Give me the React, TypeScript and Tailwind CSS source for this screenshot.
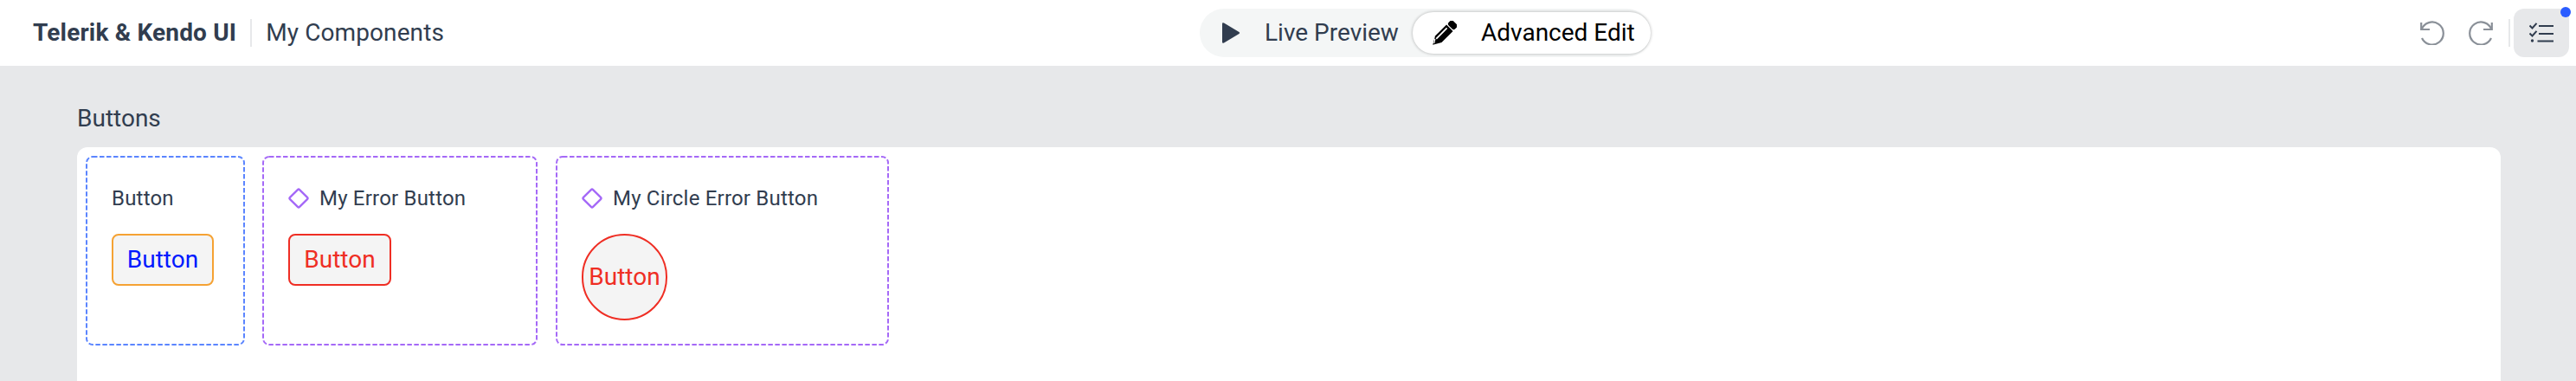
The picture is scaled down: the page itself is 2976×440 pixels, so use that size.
import React from "react";

const roboto = "font-['Roboto',sans-serif]";

function Diamond() {
  return (
    <svg width="24" height="24" viewBox="0 0 24 24" fill="none" className="shrink-0">
      <rect x="4.2" y="4.2" width="15.6" height="15.6" rx="1.5" transform="rotate(45 12 12)" stroke="#a569f7" strokeWidth="2.4" />
    </svg>
  );
}

function Tile({ w, cls, stroke, label, icon, children }: { w: number; cls: string; stroke: string; label: string; icon?: boolean; children: React.ReactNode }) {
  return (
    <div className={`${cls} relative h-[219px] shrink-0 pl-[30px] pt-[35px]`}>
      <svg width={w} height="219" className="absolute left-0 top-0" fill="none">
        <rect x="1" y="1" width={w - 2} height="217" rx="7" stroke={stroke} strokeWidth="2" strokeDasharray="5.5 2.5" />
      </svg>
      <div className="flex h-[28px] items-center gap-[12px] whitespace-nowrap text-[24px] leading-[28px] tracking-[0.2px] text-[#313d4f]">
        {icon && <Diamond />}
        <span>{label}</span>
      </div>
      <div className="mt-[27px] flex">{children}</div>
    </div>
  );
}

export default function App() {
  return (
    <div className={`flex h-[440px] w-[2976px] flex-col overflow-hidden whitespace-nowrap bg-[#e7e8ea] ${roboto}`}>
      <header className="flex h-[76px] shrink-0 items-center justify-between bg-white pl-[38px] pr-[8px]">
        <div className="flex w-[600px] items-center">
          <span className="text-[28px] font-bold leading-[36px] tracking-[0.17px] text-[#313d4f]">Telerik &amp; Kendo UI</span>
          <span className="ml-[16px] h-[32px] w-[2px] bg-[#e7e8ea]" />
          <span className="ml-[16px] text-[28px] leading-[36px] tracking-[0.1px] text-[#313d4f]">My Components</span>
        </div>

        <div className="ml-[748px] flex h-[56px] w-[521px] items-center rounded-full bg-[#f4f6f6] pl-[26px]">
          <svg width="21" height="26" viewBox="0 0 21 26" className="shrink-0">
            <path d="M2 1.5 L19.5 12 Q21 13 19.5 14 L2 24.5 Q0 25.5 0 23.5 V2.5 Q0 .5 2 1.5Z" fill="#313d4f" />
          </svg>
          <span className="ml-[28px] w-[154px] shrink-0 text-[28px] leading-[36px] text-[#313d4f]">Live Preview</span>
          <div className="ml-[17px] flex h-[48px] w-[275px] shrink-0 items-center rounded-full bg-white pl-[22px] shadow-[0_0_3px_1px_rgba(0,0,0,0.18)]">
            <svg width="29" height="29" viewBox="0 0 29 29" className="shrink-0">
              <g transform="rotate(45 14.5 14.5)">
                <rect x="9.2" y="-3" width="10.6" height="7.4" rx="2.6" fill="#000" />
                <path d="M9.2 5.6 H19.8 V24 L14.5 33.2 L9.2 24Z" fill="#000" />
                <path d="M12.4 8 V25.5" stroke="#fff" strokeWidth="1.8" />
                <path d="M11.4 26.5 L14.5 31 " stroke="#fff" strokeWidth="1.2" fill="none" />
              </g>
            </svg>
            <span className="ml-[28px] text-[28px] leading-[36px] text-black">Advanced Edit</span>
          </div>
        </div>

        <div className="ml-auto flex items-center">
          <svg width="28" height="28" viewBox="0 0 28 28" fill="none" stroke="#8a9098" strokeWidth="2.2" className="shrink-0">
            <path d="M1.6 10 A13 13 0 1 1 2 20" />
            <path d="M1.2 2 V10 H11" />
          </svg>
          <svg width="28" height="28" viewBox="0 0 28 28" fill="none" stroke="#8a9098" strokeWidth="2.2" className="ml-[28px] shrink-0">
            <path d="M26.4 10 A13 13 0 1 0 26 20" />
            <path d="M26.8 2 V10 H17" />
          </svg>
          <span className="ml-[18px] h-[32px] w-[2px] bg-[#e7e8ea]" />
          <div className="relative ml-[4px] flex h-[56px] w-[64px] items-center justify-center rounded-xl bg-[#e7e8ea]">
            <svg width="28" height="24" viewBox="0 0 28 24" fill="none" stroke="#313d4f" strokeWidth="2">
              <path d="M.5 3.5 L3.5 6.5 L8.5 .8" />
              <path d="M.5 12.5 L3.5 15.5 L8.5 9.8" />
              <circle cx="3.5" cy="21" r="1.7" fill="#313d4f" stroke="none" />
              <path d="M11 4 H28 M11 13 H28 M9.5 21.5 H28" />
            </svg>
            <span className="absolute right-[-2px] top-[-2px] h-[12px] w-[12px] rounded-full bg-[#2a5cff]" />
          </div>
        </div>
      </header>

      <main className="flex min-h-0 flex-1 flex-col pl-[89px] pr-[87px]">
        <h2 className="mt-[46px] h-[30px] text-[28px] font-normal leading-[30px] text-[#313d4f]">Buttons</h2>
        <div className="mt-[18px] flex min-h-0 flex-1 gap-[20px] rounded-t-xl bg-white pl-[10px] pt-[10px]">
          <Tile w={184} cls="w-[184px]" stroke="#5b85ff" label="Button">
            <button className="flex h-[60px] w-[118px] items-center justify-center rounded-lg border-2 border-[#f5a233] bg-[#f4f4f4] text-[28px] leading-[36px] text-[#0019ff]">Button</button>
          </Tile>
          <Tile w={318} cls="w-[318px]" stroke="#a569f7" label="My Error Button" icon>
            <button className="flex h-[60px] w-[119px] items-center justify-center rounded-lg border-2 border-[#ef2e24] bg-[#f4f4f4] text-[28px] leading-[36px] text-[#ef2e24]">Button</button>
          </Tile>
          <Tile w={385} cls="w-[385px] ml-[1px]" stroke="#a569f7" label="My Circle Error Button" icon>
            <button className="flex h-[100px] w-[99px] items-center justify-center rounded-full border-2 border-[#ef2e24] bg-[#f4f4f4] text-[28px] leading-[36px] text-[#ef2e24]">Button</button>
          </Tile>
        </div>
      </main>
    </div>
  );
}
